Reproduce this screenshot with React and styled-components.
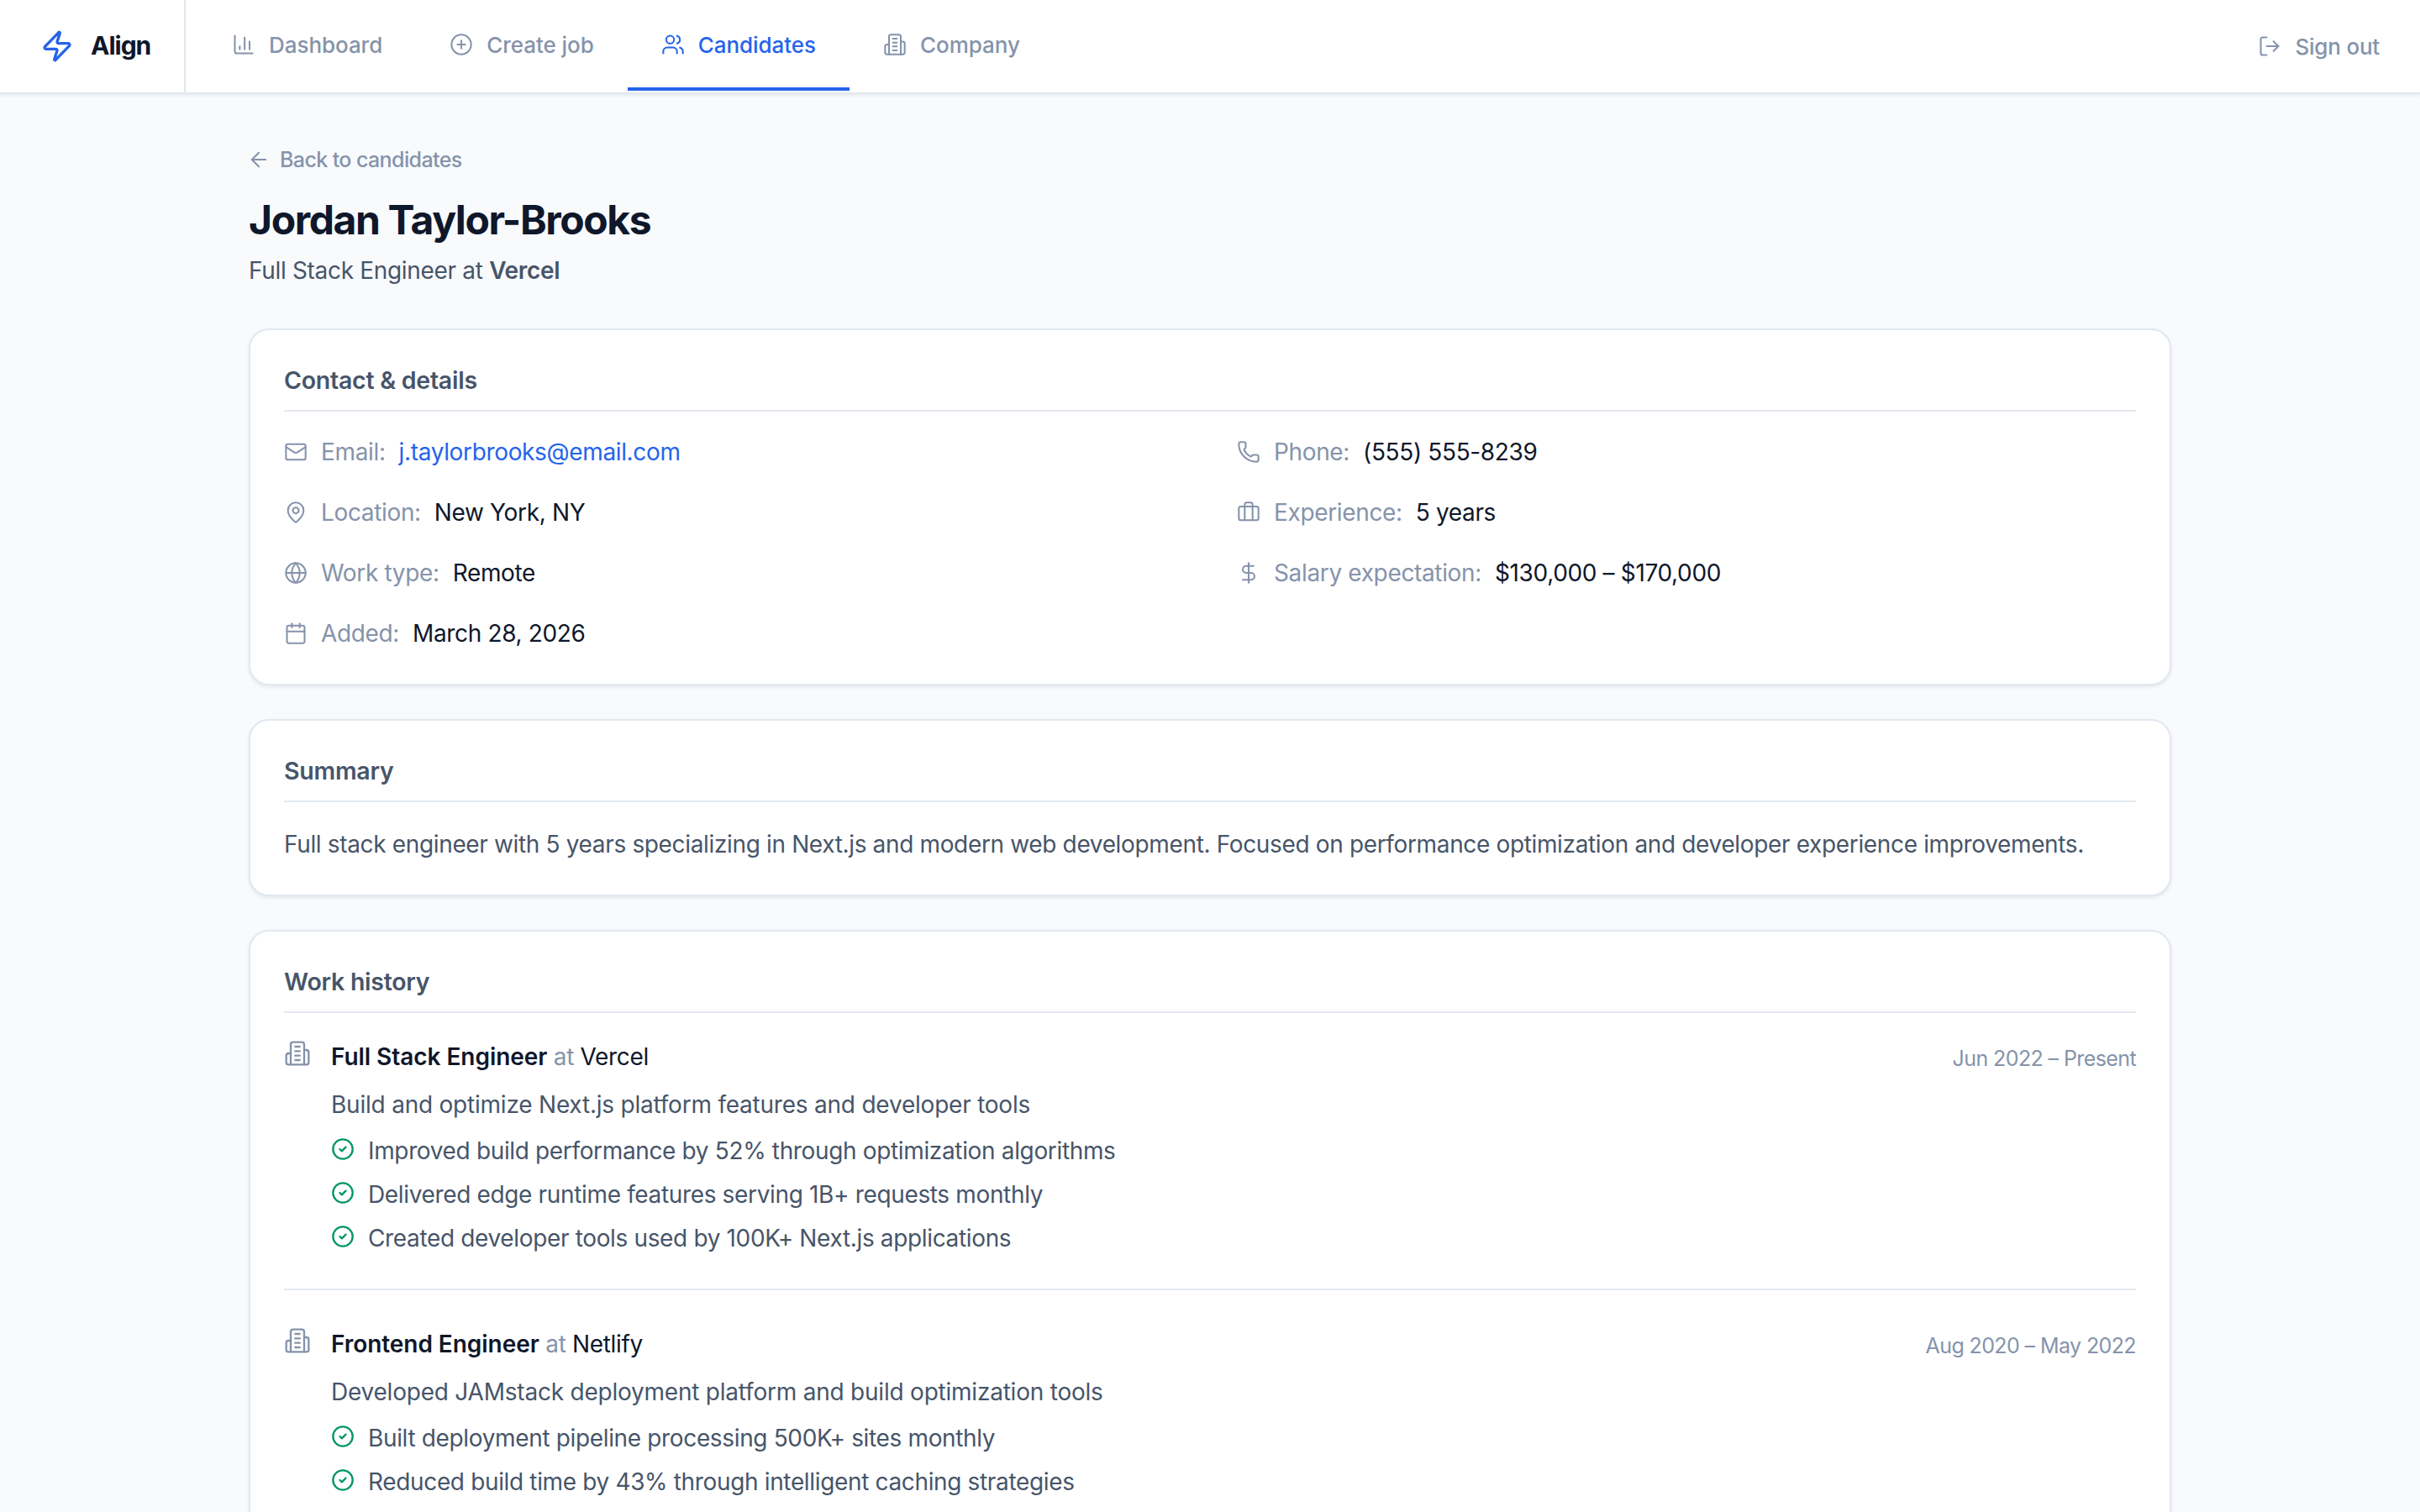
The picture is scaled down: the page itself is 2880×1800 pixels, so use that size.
import React from 'react';
import styled, { createGlobalStyle } from 'styled-components';
import {
  ArrowLeft,
  Briefcase,
  Calendar,
  ChartColumn,
  CircleCheck,
  CirclePlus,
  DollarSign,
  Globe,
  LogOut,
  Mail,
  MapPin,
  Phone,
  Users,
  Zap
} from 'lucide-react';

const GlobalStyle = createGlobalStyle`
  html, body {
    margin: 0;
    padding: 0;
    background: #f8fafc;
  }
  * {
    box-sizing: border-box;
  }
  body {
    font-family: Inter, "Liberation Sans", sans-serif;
    color: #0f172a;
  }
`;

const Page = styled.div`
  height: 1800px;
  overflow: hidden;
`;

const Navbar = styled.nav`
  display: flex;
  align-items: stretch;
  height: 112px;
  background: #fff;
  border-bottom: 2px solid #e2e8f0;
  box-shadow: 0 2px 4px rgba(15, 23, 42, 0.07);
  position: relative;
`;

const Brand = styled.div`
  display: flex;
  align-items: center;
  gap: 20px;
  width: 221px;
  padding: 0 0 0 48px;
  margin-right: 15px;
  border-right: 2px solid #e2e8f0;
  color: #2563eb;
`;

const BrandName = styled.span`
  font-size: 30px;
  font-weight: 700;
  letter-spacing: -1px;
  color: #0f172a;
  position: relative;
  top: -1px;
`;

const Tab = styled.a`
  display: flex;
  align-items: center;
  gap: 16px;
  height: 108px;
  padding: 2px 40px 0;
  font-size: 26px;
  font-weight: 500;
  letter-spacing: -0.05px;
  color: ${(p) => (p.$active ? '#2563eb' : '#8593aa')};
  border-bottom: 4px solid ${(p) => (p.$active ? '#2563eb' : 'transparent')};
`;

const SignOut = styled.a`
  display: flex;
  align-items: center;
  gap: 16px;
  margin-left: auto;
  padding-right: 48px;
  font-size: 26px;
  font-weight: 500;
  letter-spacing: -0.2px;
  color: #8593aa;
`;

const Main = styled.main`
  width: 2288px;
  margin: 0 auto;
  padding-top: 60px;
`;

const BackLink = styled.a`
  display: flex;
  align-items: center;
  gap: 11px;
  height: 36px;
  font-size: 25px;
  font-weight: 500;
  letter-spacing: -0.6px;
  color: #8593aa;
  margin: 0 0 22px -2px;
`;

const Title = styled.h1`
  margin: 0 0 8px;
  font-size: 48px;
  line-height: 64px;
  font-weight: 700;
  letter-spacing: -1.4px;
  color: #0f172a;
`;

const Subtitle = styled.p`
  margin: 0 0 49px;
  font-size: 28px;
  line-height: 40px;
  letter-spacing: -0.32px;
  color: #475569;
  strong {
    font-weight: 600;
  }
`;

const Card = styled.section`
  background: #fff;
  border: 2px solid #e2e8f0;
  border-radius: 24px;
  box-shadow: 0 2px 4px rgba(15, 23, 42, 0.08);
  padding: 40px;
  margin-bottom: 40px;
`;

const CardTitle = styled.h2`
  margin: 0 0 28px;
  padding-bottom: 15px;
  border-bottom: 2px solid #e2e8f0;
  font-size: 28.5px;
  line-height: 40px;
  font-weight: 600;
  letter-spacing: -0.25px;
  color: #475569;
`;

const DetailGrid = styled.div`
  display: grid;
  grid-template-columns: 1070px 1070px;
  column-gap: 64px;
  row-gap: 32px;
`;

const Detail = styled.div`
  display: flex;
  align-items: center;
  height: 40px;
  font-size: 28px;
  letter-spacing: -0.35px;
  color: #8593aa;
  svg {
    margin-right: 16px;
    flex-shrink: 0;
  }
`;

const Value = styled.span`
  margin-left: 16px;
  color: #0f172a;
`;

const EmailValue = styled(Value)`
  color: #2563eb;
`;

const SummaryText = styled.p`
  margin: 0;
  padding-top: 2px;
  font-size: 28px;
  line-height: 40px;
  letter-spacing: -0.35px;
  color: #475569;
  white-space: nowrap;
`;

const JobItem = styled.div`
  display: flex;
  gap: 24px;
  padding: ${(p) => (p.$first ? '4px 0 40px' : '44px 0 40px')};
  border-bottom: ${(p) => (p.$first ? '2px solid #e2e8f0' : 'none')};
`;

const JobIcon = styled.svg`
  flex: 0 0 32px;
  width: 32px;
  height: 32px;
  color: #8593aa;
  fill: none;
  stroke: currentColor;
  stroke-width: 1.75;
  stroke-linecap: round;
  stroke-linejoin: round;
`;

const JobBody = styled.div`
  flex: 1;
`;

const JobHead = styled.div`
  display: flex;
  align-items: center;
  justify-content: space-between;
  height: 40px;
  margin-bottom: 17px;
`;

const JobTitle = styled.div`
  font-size: 28px;
  letter-spacing: -0.35px;
  color: #0f172a;
  strong {
    font-weight: 600;
    letter-spacing: -0.05px;
  }
  em {
    font-style: normal;
    color: #8593aa;
  }
`;

const JobDate = styled.span`
  margin-top: 4px;
  font-size: 25px;
  letter-spacing: -0.6px;
  color: #8593aa;
`;

const JobDesc = styled.p`
  margin: 0 0 15px;
  font-size: 28px;
  line-height: 40px;
  letter-spacing: -0.22px;
  color: #475569;
`;

const Bullets = styled.ul`
  display: flex;
  flex-direction: column;
  gap: 12px;
  list-style: none;
  margin: 0;
  padding: 0;
`;

const Bullet = styled.li`
  display: flex;
  align-items: center;
  gap: 16px;
  height: 40px;
  font-size: 28px;
  letter-spacing: -0.35px;
  color: #475569;
  svg {
    color: #059669;
    margin-top: -4px;
    flex-shrink: 0;
  }
`;

const BuildingIcon = ({ as: Wrapper = 'svg', ...props }) => (
  <Wrapper viewBox="0 0 24 24" {...props}>
    <path d="M6 22V4a2 2 0 0 1 2-2h8a2 2 0 0 1 2 2v18Z" />
    <path d="M6 12H4a2 2 0 0 0-2 2v6a2 2 0 0 0 2 2h2" />
    <path d="M18 9h2a2 2 0 0 1 2 2v9a2 2 0 0 1-2 2h-2" />
    <path d="M10 6h4" />
    <path d="M10 10h4" />
    <path d="M10 14h4" />
    <path d="M10 18h4" />
  </Wrapper>
);

const NavBuilding = ({ size, strokeWidth }) => (
  <BuildingIcon
    width={size}
    height={size}
    fill="none"
    stroke="currentColor"
    strokeWidth={strokeWidth}
    strokeLinecap="round"
    strokeLinejoin="round"
  />
);

const details = [
  { icon: Mail, label: 'Email:', value: 'j.taylorbrooks@email.com', link: true },
  { icon: Phone, label: 'Phone:', value: '(555) 555-8239' },
  { icon: MapPin, label: 'Location:', value: 'New York, NY' },
  { icon: Briefcase, label: 'Experience:', value: '5 years' },
  { icon: Globe, label: 'Work type:', value: 'Remote' },
  { icon: DollarSign, label: 'Salary expectation:', value: '$130,000 – $170,000' },
  { icon: Calendar, label: 'Added:', value: 'March 28, 2026' }
];

const jobs = [
  {
    role: 'Full Stack Engineer',
    company: 'Vercel',
    dates: 'Jun 2022 – Present',
    desc: 'Build and optimize Next.js platform features and developer tools',
    points: [
      'Improved build performance by 52% through optimization algorithms',
      'Delivered edge runtime features serving 1B+ requests monthly',
      'Created developer tools used by 100K+ Next.js applications'
    ]
  },
  {
    role: 'Frontend Engineer',
    company: 'Netlify',
    dates: 'Aug 2020 – May 2022',
    desc: 'Developed JAMstack deployment platform and build optimization tools',
    points: [
      'Built deployment pipeline processing 500K+ sites monthly',
      'Reduced build time by 43% through intelligent caching strategies'
    ]
  }
];

const tabs = [
  { icon: ChartColumn, label: 'Dashboard' },
  { icon: CirclePlus, label: 'Create job' },
  { icon: Users, label: 'Candidates', active: true },
  { icon: NavBuilding, label: 'Company' }
];

export default function App() {
  return (
    <Page>
      <GlobalStyle />
      <Navbar>
        <Brand>
          <Zap size={40} strokeWidth={2} />
          <BrandName>Align</BrandName>
        </Brand>
        {tabs.map((tab) => (
          <Tab key={tab.label} $active={tab.active}>
            <tab.icon size={28} strokeWidth={1.75} />
            {tab.label}
          </Tab>
        ))}
        <SignOut>
          <LogOut size={28} strokeWidth={1.75} />
          Sign out
        </SignOut>
      </Navbar>
      <Main>
        <BackLink>
          <ArrowLeft size={28} strokeWidth={1.75} />
          Back to candidates
        </BackLink>
        <Title>Jordan Taylor-Brooks</Title>
        <Subtitle>
          Full Stack Engineer at <strong>Vercel</strong>
        </Subtitle>

        <Card>
          <CardTitle>Contact &amp; details</CardTitle>
          <DetailGrid>
            {details.map((d) => (
              <Detail key={d.label}>
                <d.icon size={28} strokeWidth={1.75} />
                {d.label}
                {d.link ? <EmailValue>{d.value}</EmailValue> : <Value>{d.value}</Value>}
              </Detail>
            ))}
          </DetailGrid>
        </Card>

        <Card>
          <CardTitle>Summary</CardTitle>
          <SummaryText>
            Full stack engineer with 5 years specializing in Next.js and modern web development. Focused on performance optimization and developer experience improvements.
          </SummaryText>
        </Card>

        <Card>
          <CardTitle>Work history</CardTitle>
          {jobs.map((job, i) => (
            <JobItem key={job.company} $first={i === 0}>
              <BuildingIcon as={JobIcon} />
              <JobBody>
                <JobHead>
                  <JobTitle>
                    <strong>{job.role}</strong> <em>at</em> {job.company}
                  </JobTitle>
                  <JobDate>{job.dates}</JobDate>
                </JobHead>
                <JobDesc>{job.desc}</JobDesc>
                <Bullets>
                  {job.points.map((point) => (
                    <Bullet key={point}>
                      <CircleCheck size={28} strokeWidth={2} />
                      {point}
                    </Bullet>
                  ))}
                </Bullets>
              </JobBody>
            </JobItem>
          ))}
        </Card>
      </Main>
    </Page>
  );
}
